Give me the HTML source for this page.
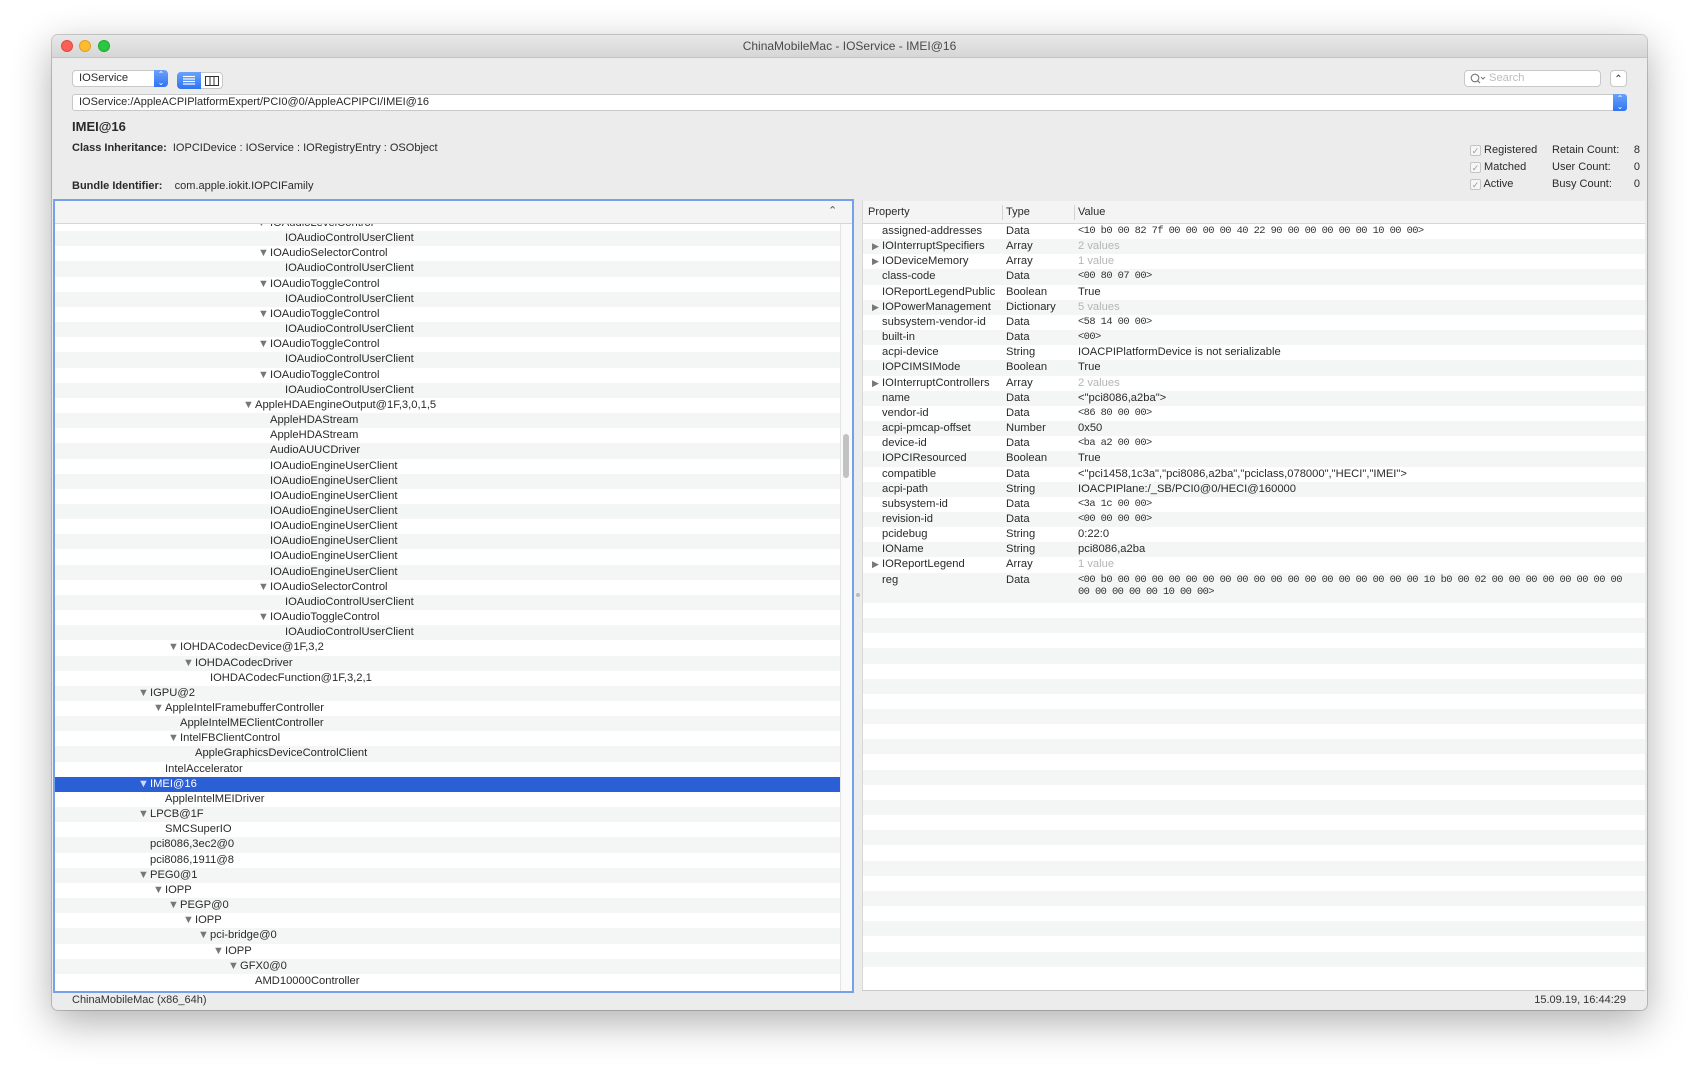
<!DOCTYPE html>
<html><head><meta charset="utf-8"><style>
*{margin:0;padding:0;box-sizing:border-box}
body{width:1699px;height:1080px;background:#fff;position:relative;overflow:hidden;font-family:"Liberation Sans",sans-serif;color:#2a2a2a;font-size:11.2px}
.a{position:absolute}
.win{left:52px;top:35px;width:1595px;height:975px;background:#ececec;border-radius:6px;box-shadow:0 12px 40px rgba(0,0,0,.32),0 0 0 1px rgba(0,0,0,.18)}
.tb{left:52px;top:35px;width:1595px;height:23px;border-radius:6px 6px 0 0;background:linear-gradient(#e8e8e8,#d6d6d6);border-bottom:1px solid #c4c4c4}
.dot{width:12px;height:12px;border-radius:50%;top:40px}
.lp{left:53px;top:199px;width:801px;height:794px;border:2px solid #76a0ea;background:#fff;overflow:hidden}
.hdr{left:0;top:0;right:0;height:23px;background:#f4f4f4;border-bottom:1px solid #d6d6d6}
.rows{position:absolute;left:0;top:23px;width:785px;bottom:0;overflow:hidden}
.rin{position:absolute;left:0;top:-8px;width:100%}
.r{height:15.17px;line-height:15.17px;white-space:nowrap;position:relative}
.r:nth-child(even){background:#f4f5f5}
.r span{position:absolute}
.r.sel{background:#2b5fd6;color:#fff}
.tri{font-size:11px;color:#777;margin-left:-2px}
.sel .tri{color:#cfdcff}
.rp{left:862px;top:201px;width:783px;height:790px;background:#fff;overflow:hidden;border-left:1px solid #d8d8d8}
.pr{height:15.17px;line-height:15.17px;white-space:nowrap;position:relative}
.pr:nth-child(even){background:#f4f5f5}
.pr span{position:absolute}
.pr .tri{font-size:9px;margin-left:0}
.m{font-family:"Liberation Mono",monospace;font-size:10.4px;letter-spacing:-0.57px;color:#333}
.g{color:#b5b5b5}
.lbl{font-weight:bold}
</style></head><body>
<div class="a win"></div>
<div class="a tb"></div>
<div class="a dot" style="left:61px;background:#fc5f57;border:1px solid #de4841"></div>
<div class="a dot" style="left:79px;background:#fdbc2e;border:1px solid #dea123"></div>
<div class="a dot" style="left:98px;background:#29c840;border:1px solid #1daa2c"></div>
<div class="a" style="left:0;width:1699px;top:39px;text-align:center;font-size:12px;color:#4a4a4a">ChinaMobileMac - IOService - IMEI@16</div>

<div class="a" style="left:72px;top:70px;width:96px;height:17px;background:#fff;border:1px solid #c8c8c8;border-radius:4px;line-height:15px;padding-left:6px">IOService</div>
<div class="a" style="left:154px;top:70px;width:14px;height:17px;background:linear-gradient(#6aa2fb,#2f74f2);border-radius:0 4px 4px 0;color:#fff;font-size:8px;text-align:center;line-height:8px;padding-top:1px">&#8963;<br>&#8964;</div>
<div class="a" style="left:177px;top:72px;width:46px;height:17px;border:1px solid #c8c8c8;border-radius:4px;background:#fff"></div>
<div class="a" style="left:177px;top:72px;width:24px;height:17px;border-radius:4px 0 0 4px;background:linear-gradient(#6aa2fb,#2f74f2)"></div>
<svg class="a" style="left:182px;top:75px" width="14" height="11"><g stroke="#fff" stroke-width="1.2"><line x1="1" y1="1.5" x2="13" y2="1.5"/><line x1="1" y1="4" x2="13" y2="4"/><line x1="1" y1="6.5" x2="13" y2="6.5"/><line x1="1" y1="9" x2="13" y2="9"/></g></svg>
<svg class="a" style="left:205px;top:75px" width="14" height="11"><rect x="0.5" y="1.5" width="13" height="9" fill="none" stroke="#333"/><line x1="5" y1="1.5" x2="5" y2="10.5" stroke="#333"/><line x1="9" y1="1.5" x2="9" y2="10.5" stroke="#333"/></svg>
<div class="a" style="left:1464px;top:70px;width:137px;height:17px;background:#fff;border:1px solid #c8c8c8;border-radius:4px;color:#bdbdbd;line-height:15px;padding-left:24px">Search</div>
<svg class="a" style="left:1470px;top:73px" width="16" height="11"><circle cx="5" cy="5" r="3.8" fill="none" stroke="#777" stroke-width="1.1"/><line x1="7.8" y1="7.8" x2="10" y2="10" stroke="#777" stroke-width="1.2"/><path d="M11 4l2 2 2-2" fill="none" stroke="#777"/></svg>
<div class="a" style="left:1610px;top:70px;width:17px;height:17px;background:#fff;border:1px solid #c8c8c8;border-radius:4px;text-align:center;font-size:10px;line-height:18px">&#8963;</div>
<div class="a" style="left:72px;top:94px;width:1555px;height:17px;background:#fff;border:1px solid #c8c8c8;border-radius:3px;line-height:15px;padding-left:6px;font-size:11px">IOService:/AppleACPIPlatformExpert/PCI0@0/AppleACPIPCI/IMEI@16</div>
<div class="a" style="left:1613px;top:94px;width:14px;height:17px;background:linear-gradient(#6aa2fb,#2f74f2);border-radius:0 3px 3px 0;color:#fff;font-size:8px;text-align:center;line-height:8px;padding-top:1px">&#8963;<br>&#8964;</div>

<div class="a" style="left:72px;top:119px;font-size:13px;font-weight:bold">IMEI@16</div>
<div class="a" style="left:72px;top:142px;font-size:11px"><span class="lbl">Class Inheritance:</span>&nbsp; IOPCIDevice : IOService : IORegistryEntry : OSObject</div>
<div class="a" style="left:72px;top:180px;font-size:11px"><span class="lbl">Bundle Identifier:</span>&nbsp;&nbsp;&nbsp; com.apple.iokit.IOPCIFamily</div>

<div class="a" style="left:1470px;top:142px;font-size:11px;line-height:17px">
<div><span style="display:inline-block;width:11px;height:11px;border:1px solid #c4c4c4;border-radius:2px;background:#f6f6f6;font-size:9px;line-height:10px;text-align:center;color:#999;vertical-align:-1px">&#10003;</span> Registered</div>
<div><span style="display:inline-block;width:11px;height:11px;border:1px solid #c4c4c4;border-radius:2px;background:#f6f6f6;font-size:9px;line-height:10px;text-align:center;color:#999;vertical-align:-1px">&#10003;</span> Matched</div>
<div><span style="display:inline-block;width:11px;height:11px;border:1px solid #c4c4c4;border-radius:2px;background:#f6f6f6;font-size:9px;line-height:10px;text-align:center;color:#999;vertical-align:-1px">&#10003;</span> Active</div>
</div>
<div class="a" style="left:1552px;top:142px;font-size:11px;line-height:17px">Retain Count:<br>User Count:<br>Busy Count:</div>
<div class="a" style="left:1630px;top:142px;font-size:11px;line-height:17px;text-align:right;width:10px">8<br>0<br>0</div>

<div class="a lp">
<div class="a hdr"></div>
<div class="a" style="left:773px;top:3px;font-size:11px;color:#555">&#8963;</div>
<div class="rows"><div class="rin">
<div class="r"><span class="tri" style="left:203px">&#9660;</span><span style="left:215px">IOAudioLevelControl</span></div>
<div class="r"><span style="left:230px">IOAudioControlUserClient</span></div>
<div class="r"><span class="tri" style="left:205px">&#9660;</span><span style="left:215px">IOAudioSelectorControl</span></div>
<div class="r"><span style="left:230px">IOAudioControlUserClient</span></div>
<div class="r"><span class="tri" style="left:205px">&#9660;</span><span style="left:215px">IOAudioToggleControl</span></div>
<div class="r"><span style="left:230px">IOAudioControlUserClient</span></div>
<div class="r"><span class="tri" style="left:205px">&#9660;</span><span style="left:215px">IOAudioToggleControl</span></div>
<div class="r"><span style="left:230px">IOAudioControlUserClient</span></div>
<div class="r"><span class="tri" style="left:205px">&#9660;</span><span style="left:215px">IOAudioToggleControl</span></div>
<div class="r"><span style="left:230px">IOAudioControlUserClient</span></div>
<div class="r"><span class="tri" style="left:205px">&#9660;</span><span style="left:215px">IOAudioToggleControl</span></div>
<div class="r"><span style="left:230px">IOAudioControlUserClient</span></div>
<div class="r"><span class="tri" style="left:190px">&#9660;</span><span style="left:200px">AppleHDAEngineOutput@1F,3,0,1,5</span></div>
<div class="r"><span style="left:215px">AppleHDAStream</span></div>
<div class="r"><span style="left:215px">AppleHDAStream</span></div>
<div class="r"><span style="left:215px">AudioAUUCDriver</span></div>
<div class="r"><span style="left:215px">IOAudioEngineUserClient</span></div>
<div class="r"><span style="left:215px">IOAudioEngineUserClient</span></div>
<div class="r"><span style="left:215px">IOAudioEngineUserClient</span></div>
<div class="r"><span style="left:215px">IOAudioEngineUserClient</span></div>
<div class="r"><span style="left:215px">IOAudioEngineUserClient</span></div>
<div class="r"><span style="left:215px">IOAudioEngineUserClient</span></div>
<div class="r"><span style="left:215px">IOAudioEngineUserClient</span></div>
<div class="r"><span style="left:215px">IOAudioEngineUserClient</span></div>
<div class="r"><span class="tri" style="left:205px">&#9660;</span><span style="left:215px">IOAudioSelectorControl</span></div>
<div class="r"><span style="left:230px">IOAudioControlUserClient</span></div>
<div class="r"><span class="tri" style="left:205px">&#9660;</span><span style="left:215px">IOAudioToggleControl</span></div>
<div class="r"><span style="left:230px">IOAudioControlUserClient</span></div>
<div class="r"><span class="tri" style="left:115px">&#9660;</span><span style="left:125px">IOHDACodecDevice@1F,3,2</span></div>
<div class="r"><span class="tri" style="left:130px">&#9660;</span><span style="left:140px">IOHDACodecDriver</span></div>
<div class="r"><span style="left:155px">IOHDACodecFunction@1F,3,2,1</span></div>
<div class="r"><span class="tri" style="left:85px">&#9660;</span><span style="left:95px">IGPU@2</span></div>
<div class="r"><span class="tri" style="left:100px">&#9660;</span><span style="left:110px">AppleIntelFramebufferController</span></div>
<div class="r"><span style="left:125px">AppleIntelMEClientController</span></div>
<div class="r"><span class="tri" style="left:115px">&#9660;</span><span style="left:125px">IntelFBClientControl</span></div>
<div class="r"><span style="left:140px">AppleGraphicsDeviceControlClient</span></div>
<div class="r"><span style="left:110px">IntelAccelerator</span></div>
<div class="r sel"><span class="tri" style="left:85px">&#9660;</span><span style="left:95px">IMEI@16</span></div>
<div class="r"><span style="left:110px">AppleIntelMEIDriver</span></div>
<div class="r"><span class="tri" style="left:85px">&#9660;</span><span style="left:95px">LPCB@1F</span></div>
<div class="r"><span style="left:110px">SMCSuperIO</span></div>
<div class="r"><span style="left:95px">pci8086,3ec2@0</span></div>
<div class="r"><span style="left:95px">pci8086,1911@8</span></div>
<div class="r"><span class="tri" style="left:85px">&#9660;</span><span style="left:95px">PEG0@1</span></div>
<div class="r"><span class="tri" style="left:100px">&#9660;</span><span style="left:110px">IOPP</span></div>
<div class="r"><span class="tri" style="left:115px">&#9660;</span><span style="left:125px">PEGP@0</span></div>
<div class="r"><span class="tri" style="left:130px">&#9660;</span><span style="left:140px">IOPP</span></div>
<div class="r"><span class="tri" style="left:145px">&#9660;</span><span style="left:155px">pci-bridge@0</span></div>
<div class="r"><span class="tri" style="left:160px">&#9660;</span><span style="left:170px">IOPP</span></div>
<div class="r"><span class="tri" style="left:175px">&#9660;</span><span style="left:185px">GFX0@0</span></div>
<div class="r"><span style="left:200px">AMD10000Controller</span></div>
</div></div>
<div class="a" style="left:785px;top:23px;width:12px;bottom:0;background:#fafafa;border-left:1px solid #e4e4e4"></div>
<div class="a" style="left:788px;top:233px;width:6px;height:44px;background:#c2c2c2;border-radius:3px"></div>
</div>

<div class="a" style="left:856px;top:593px;width:4px;height:4px;border-radius:2px;background:#bbb"></div>

<div class="a rp">
<div class="a" style="left:0;top:0;width:100%;height:23px;background:#f4f4f4;border-bottom:1px solid #d6d6d6;font-size:11px;line-height:22px">
<span class="a" style="left:5px">Property</span><span class="a" style="left:139px;top:4px;height:15px;border-left:1px solid #d4d4d4"></span>
<span class="a" style="left:143px">Type</span><span class="a" style="left:211px;top:4px;height:15px;border-left:1px solid #d4d4d4"></span>
<span class="a" style="left:215px">Value</span></div>
<div class="a" style="left:0;top:23px;width:100%">
<div class="pr"><span style="left:19px">assigned-addresses</span><span style="left:143px">Data</span><span class="m" style="left:215px">&lt;10 b0 00 82 7f 00 00 00 00 40 22 90 00 00 00 00 00 10 00 00&gt;</span></div>
<div class="pr"><span class="tri" style="left:9px">&#9654;</span><span style="left:19px">IOInterruptSpecifiers</span><span style="left:143px">Array</span><span class="g" style="left:215px">2 values</span></div>
<div class="pr"><span class="tri" style="left:9px">&#9654;</span><span style="left:19px">IODeviceMemory</span><span style="left:143px">Array</span><span class="g" style="left:215px">1 value</span></div>
<div class="pr"><span style="left:19px">class-code</span><span style="left:143px">Data</span><span class="m" style="left:215px">&lt;00 80 07 00&gt;</span></div>
<div class="pr"><span style="left:19px">IOReportLegendPublic</span><span style="left:143px">Boolean</span><span style="left:215px">True</span></div>
<div class="pr"><span class="tri" style="left:9px">&#9654;</span><span style="left:19px">IOPowerManagement</span><span style="left:143px">Dictionary</span><span class="g" style="left:215px">5 values</span></div>
<div class="pr"><span style="left:19px">subsystem-vendor-id</span><span style="left:143px">Data</span><span class="m" style="left:215px">&lt;58 14 00 00&gt;</span></div>
<div class="pr"><span style="left:19px">built-in</span><span style="left:143px">Data</span><span class="m" style="left:215px">&lt;00&gt;</span></div>
<div class="pr"><span style="left:19px">acpi-device</span><span style="left:143px">String</span><span style="left:215px">IOACPIPlatformDevice is not serializable</span></div>
<div class="pr"><span style="left:19px">IOPCIMSIMode</span><span style="left:143px">Boolean</span><span style="left:215px">True</span></div>
<div class="pr"><span class="tri" style="left:9px">&#9654;</span><span style="left:19px">IOInterruptControllers</span><span style="left:143px">Array</span><span class="g" style="left:215px">2 values</span></div>
<div class="pr"><span style="left:19px">name</span><span style="left:143px">Data</span><span style="left:215px">&lt;"pci8086,a2ba"&gt;</span></div>
<div class="pr"><span style="left:19px">vendor-id</span><span style="left:143px">Data</span><span class="m" style="left:215px">&lt;86 80 00 00&gt;</span></div>
<div class="pr"><span style="left:19px">acpi-pmcap-offset</span><span style="left:143px">Number</span><span style="left:215px">0x50</span></div>
<div class="pr"><span style="left:19px">device-id</span><span style="left:143px">Data</span><span class="m" style="left:215px">&lt;ba a2 00 00&gt;</span></div>
<div class="pr"><span style="left:19px">IOPCIResourced</span><span style="left:143px">Boolean</span><span style="left:215px">True</span></div>
<div class="pr"><span style="left:19px">compatible</span><span style="left:143px">Data</span><span style="left:215px">&lt;"pci1458,1c3a","pci8086,a2ba","pciclass,078000","HECI","IMEI"&gt;</span></div>
<div class="pr"><span style="left:19px">acpi-path</span><span style="left:143px">String</span><span style="left:215px">IOACPIPlane:/_SB/PCI0@0/HECI@160000</span></div>
<div class="pr"><span style="left:19px">subsystem-id</span><span style="left:143px">Data</span><span class="m" style="left:215px">&lt;3a 1c 00 00&gt;</span></div>
<div class="pr"><span style="left:19px">revision-id</span><span style="left:143px">Data</span><span class="m" style="left:215px">&lt;00 00 00 00&gt;</span></div>
<div class="pr"><span style="left:19px">pcidebug</span><span style="left:143px">String</span><span style="left:215px">0:22:0</span></div>
<div class="pr"><span style="left:19px">IOName</span><span style="left:143px">String</span><span style="left:215px">pci8086,a2ba</span></div>
<div class="pr"><span class="tri" style="left:9px">&#9654;</span><span style="left:19px">IOReportLegend</span><span style="left:143px">Array</span><span class="g" style="left:215px">1 value</span></div>
<div class="pr" style="height:30.34px;background:#f4f5f5"><span style="left:19px">reg</span><span style="left:143px">Data</span><span class="m" style="left:215px;line-height:12.5px;top:1px">&lt;00 b0 00 00 00 00 00 00 00 00 00 00 00 00 00 00 00 00 00 00 10 b0 00 02 00 00 00 00 00 00 00 00<br>00 00 00 00 00 10 00 00&gt;</span></div>
<div class="pr"></div><div class="pr" style="background:#f4f5f5"></div><div class="pr"></div><div class="pr" style="background:#f4f5f5"></div><div class="pr"></div><div class="pr" style="background:#f4f5f5"></div><div class="pr"></div><div class="pr" style="background:#f4f5f5"></div><div class="pr"></div><div class="pr" style="background:#f4f5f5"></div><div class="pr"></div><div class="pr" style="background:#f4f5f5"></div><div class="pr"></div><div class="pr" style="background:#f4f5f5"></div><div class="pr"></div><div class="pr" style="background:#f4f5f5"></div><div class="pr"></div><div class="pr" style="background:#f4f5f5"></div><div class="pr"></div><div class="pr" style="background:#f4f5f5"></div><div class="pr"></div><div class="pr" style="background:#f4f5f5"></div><div class="pr"></div><div class="pr" style="background:#f4f5f5"></div><div class="pr"></div>
</div>
</div>
<div class="a" style="left:862px;top:990px;width:783px;height:1px;background:#c8c8c8"></div>

<div class="a" style="left:72px;top:994px;font-size:11px;color:#333">ChinaMobileMac (x86_64h)</div>
<div class="a" style="left:1500px;width:126px;top:994px;font-size:11px;color:#333;text-align:right">15.09.19, 16:44:29</div>
</body></html>
